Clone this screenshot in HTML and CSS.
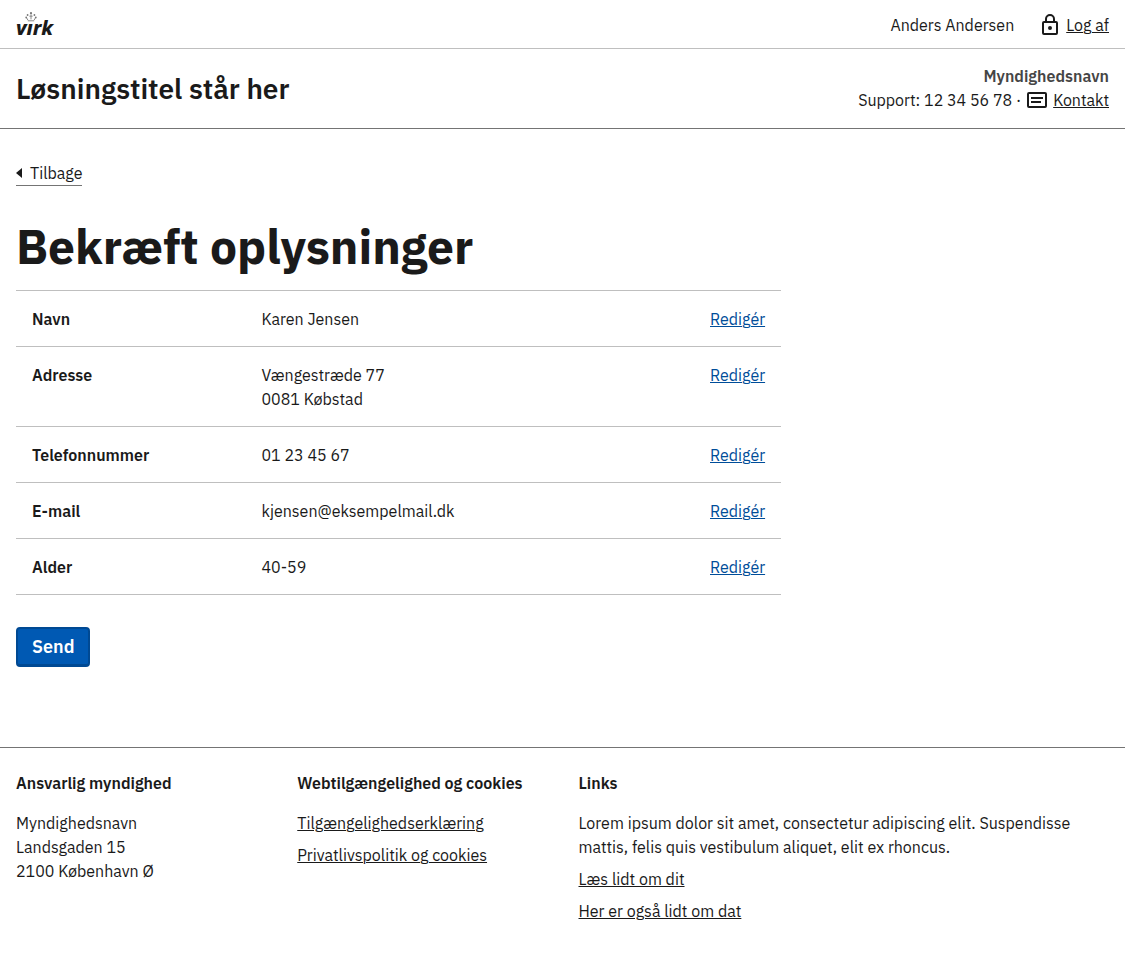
FILE: index.html
```html
<!DOCTYPE html>
<html lang="da">
<head>
<meta charset="utf-8">
<meta name="viewport" content="width=device-width, initial-scale=1">
<title>Bekræft oplysninger</title>
<link rel="stylesheet" href="styles.css">
</head>
<body>
<header>
  <div class="portal-bar">
    <a class="logo" href="#" aria-label="virk">
      <svg class="crown" viewBox="0 0 12 11" aria-hidden="true">
        <g fill="#777">
          <circle cx="6" cy="1.2" r="1.1"/><circle cx="2.6" cy="3" r=".9"/><circle cx="9.4" cy="3" r=".9"/>
          <circle cx="1.2" cy="5.4" r=".9"/><circle cx="10.8" cy="5.4" r=".9"/>
        </g>
        <path d="M6 2.4v5M4.4 4.2h3.2M1.6 6 3 8.2M10.4 6 9 8.2M2.8 8.8h6.4" fill="none" stroke="#888"/>
      </svg>
      <span>vırk</span>
    </a>
    <div class="user">
      <span>Anders Andersen</span>
      <a class="icon-link" href="#">
        <svg class="icon" viewBox="0 0 24 24" aria-hidden="true"><path d="M18 8h-1V6A5 5 0 0 0 7 6v2H6a2 2 0 0 0-2 2v10a2 2 0 0 0 2 2h12a2 2 0 0 0 2-2V10a2 2 0 0 0-2-2zM9 6a3 3 0 0 1 6 0v2H9zm9 14H6V10h12zm-6-3a2 2 0 1 0 0-4 2 2 0 0 0 0 4z"/></svg>
        <span>Log af</span>
      </a>
    </div>
  </div>
  <div class="solution-bar">
    <span class="solution-title">Løsningstitel står her</span>
    <div class="authority">
      <strong>Myndighedsnavn</strong>
      <div class="support">
        <span>Support: 12 34 56 78 ·</span>
        <a class="icon-link" href="#">
          <svg class="icon" viewBox="0 0 24 24" aria-hidden="true"><path d="M4 4h16a2 2 0 0 1 2 2v12a2 2 0 0 1-2 2H4a2 2 0 0 1-2-2V6a2 2 0 0 1 2-2zm0 2v12h16V6zm2 3h12v2H6zm0 4h10v2H6z" fill-rule="evenodd"/></svg>
          <span>Kontakt</span>
        </a>
      </div>
    </div>
  </div>
</header>
<main>
  <a class="back" href="#">
    <svg class="arrow" viewBox="0 0 6 10" aria-hidden="true"><path d="M0 5 6 0v10z"/></svg>Tilbage
  </a>
  <h1>Bekræft oplysninger</h1>
  <table>
    <tbody>
      <tr><th scope="row">Navn</th><td>Karen Jensen</td><td class="edit"><a href="#">Redigér</a></td></tr>
      <tr><th scope="row">Adresse</th><td>Vængestræde 77<br>0081 Købstad</td><td class="edit"><a href="#">Redigér</a></td></tr>
      <tr><th scope="row">Telefonnummer</th><td>01 23 45 67</td><td class="edit"><a href="#">Redigér</a></td></tr>
      <tr><th scope="row">E-mail</th><td>kjensen@eksempelmail.dk</td><td class="edit"><a href="#">Redigér</a></td></tr>
      <tr><th scope="row">Alder</th><td>40-59</td><td class="edit"><a href="#">Redigér</a></td></tr>
    </tbody>
  </table>
  <button class="send" type="button">Send</button>
</main>
<footer>
  <section>
    <h2>Ansvarlig myndighed</h2>
    <p>Myndighedsnavn<br>Landsgaden 15<br>2100 København Ø</p>
  </section>
  <section>
    <h2>Webtilgængelighed og cookies</h2>
    <ul>
      <li><a href="#">Tilgængelighedserklæring</a></li>
      <li><a href="#">Privatlivspolitik og cookies</a></li>
    </ul>
  </section>
  <section>
    <h2>Links</h2>
    <p>Lorem ipsum dolor sit amet, consectetur adipiscing elit. Suspendisse mattis, felis quis vestibulum aliquet, elit ex rhoncus.</p>
    <ul>
      <li><a href="#">Læs lidt om dit</a></li>
      <li><a href="#">Her er også lidt om dat</a></li>
    </ul>
  </section>
</footer>
</body>
</html>
```

FILE: styles.css
```css
* { box-sizing: border-box; }
body {
  margin: 0;
  background: #fff;
  color: #1a1a1a;
  font: 16px/24px "IBM Plex Sans", "Noto Sans", sans-serif;
}
a { color: inherit; text-decoration-thickness: 1px; text-underline-offset: 1px; }
.portal-bar, .solution-bar {
  display: flex;
  align-items: center;
  justify-content: space-between;
  padding: 0 16px;
}
.portal-bar { min-height: 49px; border-bottom: 1px solid #bfbfbf; }
.solution-bar { min-height: 80px; border-bottom: 1px solid #747474; }
.logo {
  position: relative;
  padding-top: 8px;
  font: italic 800 20px/24px "Noto Sans", sans-serif;
  text-decoration: none;
}
.crown { position: absolute; left: 9px; top: 4px; width: 12px; height: 11px; }
.user { display: flex; gap: 24px; padding-top: 1px; }
.icon-link { display: inline-flex; align-items: center; gap: 4px; text-decoration: none; }
.icon-link span { text-decoration: underline 1px; text-underline-offset: 1px; }
.icon { width: 24px; height: 24px; fill: #1a1a1a; }
.solution-title { font-size: 28px; line-height: 32px; font-weight: 600; }
.authority { padding-bottom: 1px; text-align: right; }
.authority strong { display: block; color: #454545; font-weight: 600; }
.support { display: flex; gap: 4px; }
main { padding: 31px 16px 80px; }
.back {
  display: inline-flex;
  align-items: center;
  gap: 8px;
  border-bottom: 1px solid #747474;
  text-decoration: none;
}
.arrow { width: 6px; height: 10px; fill: #1a1a1a; }
h1 { margin: 32px 0 16px; font-size: 48px; line-height: 56px; font-weight: 700; }
table {
  width: 70%;
  table-layout: fixed;
  border-collapse: collapse;
  border-top: 1px solid #bfbfbf;
}
tr { border-bottom: 1px solid #bfbfbf; }
th, td { padding: 16px 16px 15px; text-align: left; vertical-align: top; }
th { width: 30%; font-weight: 600; }
.edit { width: 20%; text-align: right; }
.edit a { color: #004d99; }
.send {
  display: block;
  min-height: 40px;
  margin-top: 32px;
  padding: 4px 14px;
  border: 2px solid #004993;
  border-bottom-width: 3px;
  border-radius: 4px;
  background: #0059b3;
  color: #fff;
  font: 600 18px/24px "IBM Plex Sans", "Noto Sans", sans-serif;
}
footer {
  display: grid;
  grid-template-columns: 1fr 1fr 2fr;
  border-top: 1px solid #747474;
  padding-bottom: 32px;
}
footer section { padding: 23px 0 0 16px; }
footer section:last-child { padding-right: 16px; }
footer h2 { margin: 0 0 16px; font-size: 16px; line-height: 24px; font-weight: 600; }
footer p { margin: 0 0 8px; }
footer ul { margin: 0; padding: 0; list-style: none; }
footer li { margin-bottom: 8px; }
```
